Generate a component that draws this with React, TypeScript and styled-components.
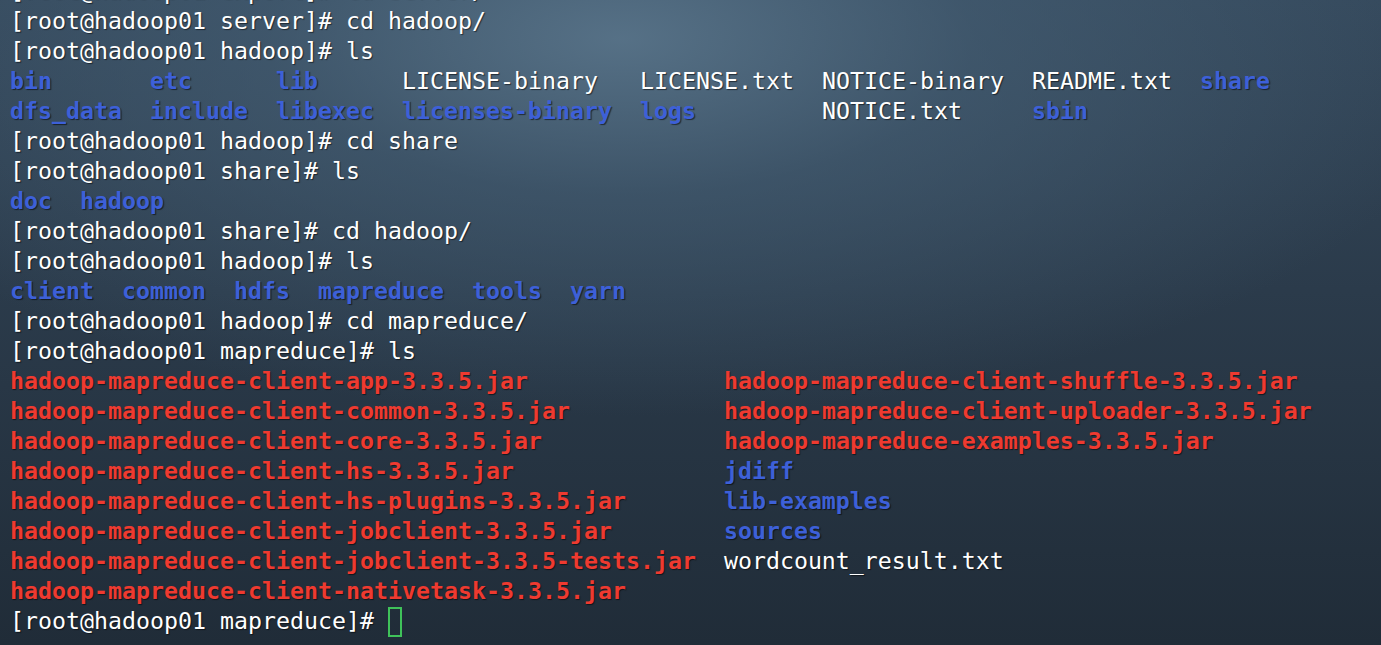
import React from "react";
import styled, { createGlobalStyle } from "styled-components";

const Global = createGlobalStyle`
  html, body { margin: 0; padding: 0; height: 100%; overflow: hidden; }
  body { background: #23303c; }
  #root { height: 100%; }
`;

const Screen = styled.div`
  height: 645px;
  width: 1381px;
  overflow: hidden;
  background:
    radial-gradient(ellipse 80% 75% at 45% 6%, rgba(92, 120, 142, 0.85) 0%, rgba(70, 96, 118, 0.6) 32%, rgba(45, 62, 78, 0) 78%),
    linear-gradient(180deg, #34485b 0%, #2b3b4b 45%, #202c38 100%);
`;

const Output = styled.div`
  margin-top: -24px;
  padding-left: 10px;
  font-family: "DejaVu Sans Mono", "Liberation Mono", monospace;
  font-size: 23.25px;
  line-height: 30px;
  color: #ffffff;
  text-shadow: 1px 1px 1px rgba(0, 0, 0, 0.55);
`;

const Line = styled.div`
  white-space: pre;
  height: 30px;
`;

type Kind = "dir" | "jar" | "file";

const Entry = styled.span<{ $kind: Kind }>`
  color: ${(p) => (p.$kind === "dir" ? "#3d60d8" : p.$kind === "jar" ? "#ee3a30" : "#ffffff")};
  font-weight: ${(p) => (p.$kind === "file" ? 400 : 700)};
`;

const Cursor = styled.span`
  display: inline-block;
  width: 14px;
  height: 30px;
  box-sizing: border-box;
  border: 2px solid #3fc25a;
  vertical-align: top;
  margin-top: 1px;
`;

type Item = [string, Kind];

const Row = ({ items, widths }: { items: Item[]; widths: number[] }) => (
  <Line>
    {items.map(([name, kind], i) => (
      <React.Fragment key={i}>
        <Entry $kind={kind}>{name}</Entry>
        {i < items.length - 1 ? " ".repeat(Math.max(0, widths[i] - name.length)) : ""}
      </React.Fragment>
    ))}
  </Line>
);

const Prompt = ({ dir, cmd }: { dir: string; cmd: string }) => (
  <Line>{`[root@hadoop01 ${dir}]# ${cmd}`}</Line>
);

const lsWidths = [10, 9, 9, 17, 13, 15, 12];

const left: Item[] = [
  ["hadoop-mapreduce-client-app-3.3.5.jar", "jar"],
  ["hadoop-mapreduce-client-common-3.3.5.jar", "jar"],
  ["hadoop-mapreduce-client-core-3.3.5.jar", "jar"],
  ["hadoop-mapreduce-client-hs-3.3.5.jar", "jar"],
  ["hadoop-mapreduce-client-hs-plugins-3.3.5.jar", "jar"],
  ["hadoop-mapreduce-client-jobclient-3.3.5.jar", "jar"],
  ["hadoop-mapreduce-client-jobclient-3.3.5-tests.jar", "jar"],
  ["hadoop-mapreduce-client-nativetask-3.3.5.jar", "jar"],
];
const right: Item[] = [
  ["hadoop-mapreduce-client-shuffle-3.3.5.jar", "jar"],
  ["hadoop-mapreduce-client-uploader-3.3.5.jar", "jar"],
  ["hadoop-mapreduce-examples-3.3.5.jar", "jar"],
  ["jdiff", "dir"],
  ["lib-examples", "dir"],
  ["sources", "dir"],
  ["wordcount_result.txt", "file"],
];

export default function App() {
  return (
    <Screen>
      <Global />
      <Output>
        <Prompt dir="export" cmd="cd server/" />
        <Prompt dir="server" cmd="cd hadoop/" />
        <Prompt dir="hadoop" cmd="ls" />
        <Row
          widths={lsWidths}
          items={[
            ["bin", "dir"],
            ["etc", "dir"],
            ["lib", "dir"],
            ["LICENSE-binary", "file"],
            ["LICENSE.txt", "file"],
            ["NOTICE-binary", "file"],
            ["README.txt", "file"],
            ["share", "dir"],
          ]}
        />
        <Row
          widths={[10, 9, 9, 17, 13, 15]}
          items={[
            ["dfs_data", "dir"],
            ["include", "dir"],
            ["libexec", "dir"],
            ["licenses-binary", "dir"],
            ["logs", "dir"],
            ["NOTICE.txt", "file"],
            ["sbin", "dir"],
          ]}
        />
        <Prompt dir="hadoop" cmd="cd share" />
        <Prompt dir="share" cmd="ls" />
        <Row widths={[5]} items={[["doc", "dir"], ["hadoop", "dir"]]} />
        <Prompt dir="share" cmd="cd hadoop/" />
        <Prompt dir="hadoop" cmd="ls" />
        <Row
          widths={[8, 8, 6, 11, 7]}
          items={[
            ["client", "dir"],
            ["common", "dir"],
            ["hdfs", "dir"],
            ["mapreduce", "dir"],
            ["tools", "dir"],
            ["yarn", "dir"],
          ]}
        />
        <Prompt dir="hadoop" cmd="cd mapreduce/" />
        <Prompt dir="mapreduce" cmd="ls" />
        {left.map((l, i) => (
          <Row key={i} widths={[51]} items={right[i] ? [l, right[i]] : [l]} />
        ))}
        <Line>
          {"[root@hadoop01 mapreduce]# "}
          <Cursor />
        </Line>
      </Output>
    </Screen>
  );
}
